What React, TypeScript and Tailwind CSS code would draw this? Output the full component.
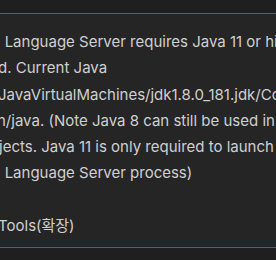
import React from 'react';

const lines = [
  { text: 'a Language Server requires Java 11 or higher to be', shift: -8 },
  { text: 'd. Current Java', shift: -2 },
  { text: 'JavaVirtualMachines/jdk1.8.0_181.jdk/Contents/Home/bi', shift: -2 },
  { text: 'n/java. (Note Java 8 can still be used in your', shift: -3 },
  { text: 'jects. Java 11 is only required to launch the', shift: -1 },
  { text: 'a Language Server process)', shift: -8 },
  { text: '\u00a0', shift: 0 },
  { text: 'Tools(확장)', shift: -2 },
];

export default function App() {
  return (
    <div className="w-[276px] h-[260px] overflow-hidden bg-[#1f1f1f] font-['Inter','Noto_Sans_CJK_KR',sans-serif]">
      <div className="h-[13px] bg-[#1f1f1f]" />
      <div className="h-[235px] border-y border-[#0e74c9] bg-[#252526] pt-[15px] text-[15px] leading-[26.3px] text-[#d0d0d0]">
        {lines.map((l, i) => (
          <div key={i} className="whitespace-nowrap" style={{ marginLeft: l.shift }}>
            {l.text}
          </div>
        ))}
      </div>
      <div className="h-[12px] bg-[#1f1f1f]" />
    </div>
  );
}
